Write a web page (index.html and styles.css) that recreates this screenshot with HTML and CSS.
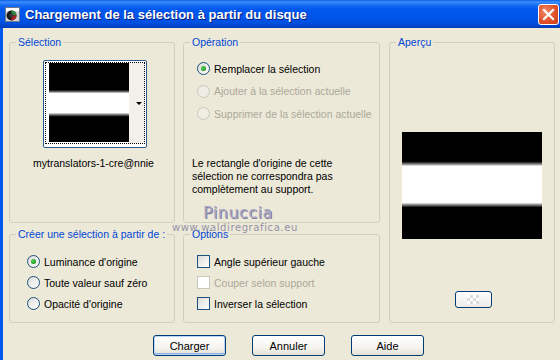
FILE: index.html
```html
<!DOCTYPE html>
<html lang="fr">
<head>
    <meta charset="UTF-8">
    <title>Chargement de la sélection à partir du disque</title>
    <link rel="stylesheet" href="styles.css">
</head>
<body>
    <div class="window">
        <div class="titlebar">
            <svg class="app-icon" width="15" height="15" viewBox="0 0 15 15">
                <rect x="0.5" y="0.5" width="14" height="14" fill="#d8d8d8" stroke="#6d7a90"/>
                <rect x="1" y="1" width="13" height="3" fill="#ffffff"/>
                <circle cx="6.5" cy="8.5" r="5" fill="#1a1a1a"/>
                <path d="M6.5 3.5 A5 5 0 0 1 11.5 8.5 L6.5 8.5 Z" fill="#2e8b3a"/>
                <path d="M6.5 8.5 L11.5 8.5 A5 5 0 0 1 6.5 13.5 Z" fill="#b02020"/>
                <circle cx="6.5" cy="8.5" r="2" fill="#3a3a3a"/>
            </svg>
            <span class="title">Chargement de la sélection à partir du disque</span>
            <div class="close">
                <svg width="13" height="13" viewBox="0 0 13 13">
                    <path d="M2 2 L11 11 M11 2 L2 11" stroke="#ffffff" stroke-width="2.2" stroke-linecap="square"/>
                </svg>
            </div>
        </div>

        <div class="client">
            <div class="groups">
                <div class="group group-selection">
                    <div class="group-title">Sélection</div>
                    <div class="thumb">
                        <div class="thumb-focus">
                            <div class="bands bands-small"></div>
                            <div class="thumb-side"><span class="arrow"></span></div>
                        </div>
                    </div>
                    <div class="thumb-label">mytranslators-1-cre@nnie</div>
                </div>

                <div class="group group-operation">
                    <div class="group-title">Opération</div>
                    <div class="choices choices-operation">
                        <div class="choice"><span class="radio checked"></span>Remplacer la sélection</div>
                        <div class="choice disabled"><span class="radio"></span>Ajouter à la sélection actuelle</div>
                        <div class="choice disabled"><span class="radio"></span>Supprimer de la sélection actuelle</div>
                    </div>
                    <p class="note">Le rectangle d'origine de cette sélection ne correspondra pas complètement au support.</p>
                </div>

                <div class="group group-preview">
                    <div class="group-title">Aperçu</div>
                    <div class="bands bands-large"></div>
                    <div class="mini-button"><span class="checker"></span></div>
                </div>

                <div class="group group-source">
                    <div class="group-title">Créer une sélection à partir de :</div>
                    <div class="choices">
                        <div class="choice"><span class="radio checked"></span>Luminance d'origine</div>
                        <div class="choice"><span class="radio"></span>Toute valeur sauf zéro</div>
                        <div class="choice"><span class="radio"></span>Opacité d'origine</div>
                    </div>
                </div>

                <div class="group group-options">
                    <div class="group-title">Options</div>
                    <div class="choices">
                        <div class="choice"><span class="check"></span>Angle supérieur gauche</div>
                        <div class="choice disabled"><span class="check"></span>Couper selon support</div>
                        <div class="choice"><span class="check"></span>Inverser la sélection</div>
                    </div>
                </div>
            </div>

            <div class="buttons">
                <button class="btn default">Charger</button>
                <button class="btn">Annuler</button>
                <button class="btn">Aide</button>
            </div>

            <div class="watermark-name">Pinuccia</div>
            <div class="watermark-url">www.waldiregrafica.eu</div>
        </div>
    </div>
</body>
</html>
```

FILE: styles.css
```css
body {
    margin: 0;
    background: #ece9d8;
    font-family: 'Liberation Sans', Arial, sans-serif;
    font-size: 10.5px;
    color: #000;
    overflow: hidden;
}

.window {
    width: 560px;
    height: 360px;
    display: flex;
    flex-direction: column;
}

/* title bar */
.titlebar {
    height: 28px;
    flex: none;
    display: flex;
    align-items: center;
    padding-left: 5px;
    background: linear-gradient(to bottom,
        #0a5fe8 0, #3d8ffc 2px, #1a6cf2 5px, #0058ee 9px,
        #0055e8 18px, #0050e0 23px, #0043c9 26px, #003cb8 28px);
}

.app-icon {
    flex: none;
    margin-top: 1px;
}

.title {
    margin-left: 5px;
    font-size: 13px;
    font-weight: bold;
    color: #fff;
    text-shadow: 1px 1px 0 #0a1d7a;
    white-space: nowrap;
}

.close {
    width: 19px;
    height: 19px;
    margin-left: auto;
    margin-right: 1px;
    border: 1px solid #fff;
    border-radius: 3px;
    background: radial-gradient(circle at 35% 35%, #f08a6a, #e0522a 55%, #c73d18);
    display: flex;
    align-items: center;
    justify-content: center;
}

/* client area */
.client {
    flex: 1;
    position: relative;
    border-left: 3px solid #0058ee;
    padding: 14px 0 0 6px;
}

.groups {
    display: grid;
    grid-template-columns: 166px 197px 167px;
    grid-template-rows: 181px 89px;
    column-gap: 8px;
    row-gap: 11px;
}

.group {
    border: 1px solid #d0d0bf;
    border-radius: 3px;
    display: flex;
    flex-direction: column;
}

.group-title {
    margin: -7px 0 0 6px;
    padding: 0 2px;
    width: fit-content;
    line-height: 13px;
    color: #0046d5;
    background: #ece9d8;
    white-space: nowrap;
}

.group-preview {
    grid-column: 3;
    grid-row: 1 / span 2;
    margin-left: 1px;
    align-items: center;
}

.group-preview .group-title {
    align-self: flex-start;
}

/* selection thumbnail */
.thumb {
    width: 100px;
    height: 84px;
    margin: 11px 0 0 33px;
    border: 1px solid #2b5a8c;
    border-radius: 2px;
    background: #fff;
    padding: 1px;
}

.thumb-focus {
    height: 80px;
    border: 1px dotted #000;
    display: flex;
}

.thumb-side {
    flex: 1;
    background: #f1f0ea;
    display: flex;
    align-items: center;
    justify-content: flex-end;
    padding-right: 2px;
}

.arrow {
    width: 0;
    height: 0;
    border-left: 3px solid transparent;
    border-right: 3px solid transparent;
    border-top: 3px solid #000;
}

.bands-small {
    width: 80px;
    height: 79px;
    margin-left: 3px;
    flex: none;
    background: linear-gradient(to bottom,
        #000 0, #000 34%, #777 36.5%, #fff 38.5%,
        #fff 63%, #888 65%, #000 68%, #000 100%);
}

.thumb-label {
    margin-top: 9px;
    padding-left: 3px;
    text-align: center;
    line-height: 13px;
}

/* radio and check lists */
.choices {
    display: flex;
    flex-direction: column;
    gap: 8px;
    margin: 14px 0 0 17px;
}

.choices-operation {
    margin: 13px 0 0 13px;
    gap: 9.5px;
}

.group-options .choices {
    margin-left: 13px;
}

.choice {
    display: flex;
    align-items: center;
    height: 13px;
    white-space: nowrap;
}

.choice.disabled {
    color: #aca899;
}

.radio {
    width: 11px;
    height: 11px;
    flex: none;
    margin-right: 4px;
    border: 1px solid #1c5180;
    border-radius: 50%;
    background: linear-gradient(135deg, #dcdcd7, #fff);
    display: flex;
    align-items: center;
    justify-content: center;
}

.radio.checked::after {
    content: '';
    width: 5px;
    height: 5px;
    border-radius: 50%;
    background: radial-gradient(circle at 40% 40%, #5fd35f, #21a121 60%, #1a7d1a);
}

.disabled .radio {
    border-color: #cac8bb;
    background: #f0eee4;
}

.check {
    width: 11px;
    height: 11px;
    flex: none;
    margin-right: 4px;
    border: 1px solid #1c5180;
    background: linear-gradient(135deg, #dcdcd7, #fff);
}

.disabled .check {
    border-color: #cac8bb;
    background: #fff;
}

.note {
    margin: 37px 0 0 8px;
    line-height: 13px;
    width: 180px;
}

/* preview */
.bands-large {
    width: 140px;
    height: 107px;
    margin-top: 83px;
    background: linear-gradient(to bottom,
        #000 0, #000 27.5%, #666 29.5%, #fff 32%,
        #fff 66%, #888 68%, #000 70.5%, #000 100%);
}

.mini-button {
    width: 35px;
    height: 15px;
    margin-top: 52px;
    margin-left: 2px;
    border: 1px solid #003c74;
    border-radius: 3px;
    background: linear-gradient(to bottom, #fff, #ecebe6);
    display: flex;
    align-items: center;
    justify-content: center;
}

.checker {
    width: 12px;
    height: 9px;
    background: repeating-conic-gradient(#dcdcdc 0 25%, #fff 0 50%) 0 0 / 6px 6px;
}

/* buttons */
.buttons {
    display: flex;
    gap: 26px;
    margin: 12px 0 0 144px;
}

.btn {
    width: 73px;
    height: 21px;
    padding: 0;
    border: 1px solid #003c74;
    border-radius: 3px;
    background: linear-gradient(to bottom, #fff 0, #f5f4ef 60%, #e3e1d6 100%);
    font-family: 'Liberation Sans', Arial, sans-serif;
    font-size: 11px;
    color: #000;
}

.btn.default {
    box-shadow: inset 0 0 0 1px #bcd4f6, inset 0 -1px 0 1px #89ade4;
}

/* watermark over the dialog */
.watermark-name {
    position: absolute;
    left: 200px;
    top: 175px;
    font-family: 'DejaVu Sans', sans-serif;
    font-size: 16px;
    letter-spacing: 0.5px;
    color: #a9a6c4;
    text-shadow: 1px 1px 0 #7d7a99;
}

.watermark-url {
    position: absolute;
    left: 169px;
    top: 194px;
    font-family: 'DejaVu Sans', sans-serif;
    font-size: 10px;
    letter-spacing: 0.6px;
    color: #9493a6;
}
```
